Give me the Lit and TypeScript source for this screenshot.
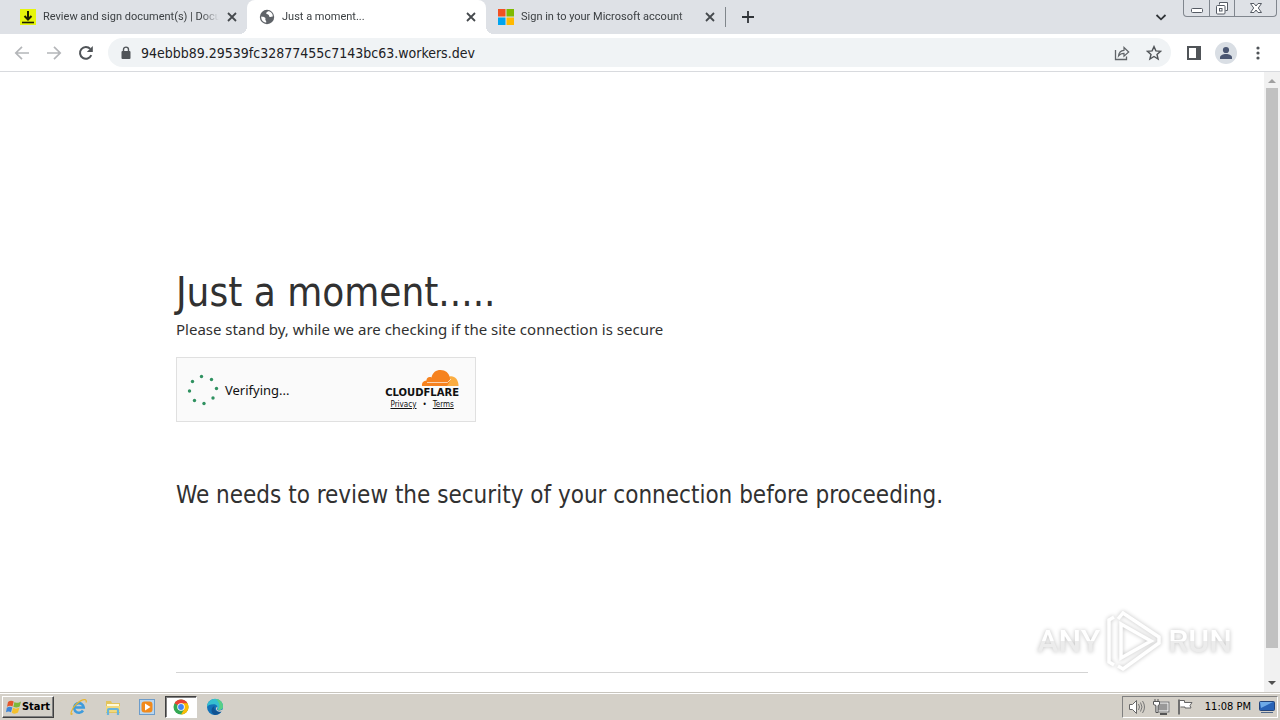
import { LitElement, html, css, svg } from "lit";
import { customElement, property } from "lit/decorators.js";

const closeIcon = html`<svg width="12" height="12" viewBox="0 0 12 12"><path d="M2 2l8 8M10 2l-8 8" stroke="#45494d" stroke-width="1.8" fill="none"/></svg>`;

const downloadIcon = html`<svg width="16" height="16" viewBox="0 0 16 16"><rect width="16" height="16" fill="#e6f50a"/><path d="M8 2v8M4.500 7L8 10.500 11.500 7" stroke="#1c1e00" stroke-width="2" fill="none"/><path d="M2 13.500h12" stroke="#1c1e00" stroke-width="1.600"/></svg>`;

const globeIcon = html`<svg width="16" height="16" viewBox="0 0 16 16"><circle cx="8" cy="8" r="7.200" fill="#5f6368"/><path d="M2.200 7.500c1.500.2 3 .2 4 1.300.8.9-.4 1.800.5 2.600.7.600.4 1.600.6 2.200C4 13.600 2 10.800 2.200 7.500zM9 2c-.3 1.200-1.600 1-1.800 2.100-.2 1.100 1.300 1.200 2.200 1.600 1 .5.3 1.700 1.400 2.200 1.100.4 1.600-.4 3-.3.2-2.800-1.800-5.200-4.800-5.600z" fill="#fff"/></svg>`;

const microsoftIcon = html`<svg width="16" height="16" viewBox="0 0 16 16"><path fill="#f25022" d="M0 0h7.500v7.500H0z"/><path fill="#7fba00" d="M8.500 0H16v7.500H8.500z"/><path fill="#00a4ef" d="M0 8.500h7.500V16H0z"/><path fill="#ffb900" d="M8.500 8.500H16V16H8.500z"/></svg>`;

const FONT = css`"DejaVu Sans Condensed", "Noto Sans", sans-serif`;
const LIGHT_FONT = css`"Noto Sans", "DejaVu Sans Condensed", sans-serif`;

@customElement("browser-tab")
class BrowserTab extends LitElement {
  @property() label = "";
  @property({ type: Boolean, reflect: true }) active = false;
  @property({ attribute: false }) icon: unknown;

  static styles = css`
    :host { display: flex; flex: 0 1 239px; min-width: 0; height: 34px; align-items: center; gap: 7px; padding: 0 9px 0 12px; box-sizing: border-box; color: #3c4043; position: relative; }
    :host([active]) { background: #fff; border-radius: 8px 8px 0 0; }
    :host([active])::before, :host([active])::after { content: ""; position: absolute; bottom: 0; width: 8px; height: 8px; }
    :host([active])::before { left: -8px; background: radial-gradient(circle at 0 0, transparent 8px, #fff 8px); }
    :host([active])::after { right: -8px; background: radial-gradient(circle at 100% 0, transparent 8px, #fff 8px); }
    .icon { display: flex; flex: none; }
    .title { flex: 1; min-width: 0; overflow: hidden; white-space: nowrap; font: 11px/16px Roboto, sans-serif; mask-image: linear-gradient(to right, #000 calc(100% - 18px), transparent); }
    button { display: flex; flex: none; padding: 0; border: 0; background: none; }
  `;

  render() {
    return html`<span class="icon">${this.icon}</span><span class="title">${this.label}</span><button aria-label="Close tab">${closeIcon}</button>`;
  }
}

@customElement("browser-chrome")
class BrowserChrome extends LitElement {
  static styles = css`
    :host { display: block; flex: none; }
    button { display: flex; align-items: center; justify-content: center; padding: 0; border: 0; background: none; }
    .strip { display: flex; height: 34px; padding-left: 8px; background: #dee1e6; align-items: center; }
    .divider { width: 1px; height: 20px; background: #80868b; flex: none; }
    .new { width: 44px; height: 34px; }
    .search { width: 32px; height: 34px; margin-left: auto; margin-right: 6px; }
    .window { display: flex; align-self: flex-start; height: 17px; box-sizing: border-box; border: 1px solid #80868e; border-top: 0; border-radius: 0 0 4px 4px; margin-right: 3px; }
    .window button { width: 25px; }
    .window button + button { border-left: 1px solid #80868e; }
    .window .exit { width: 42px; }
    .bar { display: flex; height: 37px; align-items: center; padding: 0 6px; border-bottom: 1px solid #d8dade; }
    .bar button { width: 32px; height: 32px; flex: none; }
    .address { display: flex; flex: 1; min-width: 0; align-items: center; height: 29px; margin: 0 7px 0 6px; padding: 0 1px 0 12px; border-radius: 15px; background: #f0f3f5; gap: 9px; }
    .address svg { flex: none; }
    .actions { display: flex; }
    input { flex: 1; min-width: 0; border: 0; padding: 0; margin: 0; outline: 0; background: none; color: #202124; font: 14px/20px ${FONT}; }
  `;

  render() {
    return html`
      <div class="strip">
        <browser-tab label="Review and sign document(s) | Docu" .icon=${downloadIcon}></browser-tab>
        <browser-tab active label="Just a moment..." .icon=${globeIcon}></browser-tab>
        <browser-tab label="Sign in to your Microsoft account" .icon=${microsoftIcon}></browser-tab>
        <span class="divider"></span>
        <button class="new" aria-label="New tab"><svg width="14" height="14" viewBox="0 0 14 14"><path d="M7 1v12M1 7h12" stroke="#303438" stroke-width="1.800"/></svg></button>
        <button class="search" aria-label="Search tabs"><svg width="12" height="12" viewBox="0 0 12 12"><path d="M1.500 4L6 8.300 10.500 4" fill="none" stroke="#303438" stroke-width="1.800"/></svg></button>
        <div class="window">
          <button aria-label="Minimize"><svg width="14" height="16" viewBox="0 0 14 16"><rect x="1.500" y="8.500" width="11" height="4" rx="1" fill="#fff" stroke="#555b64"/></svg></button>
          <button aria-label="Restore"><svg width="14" height="16" viewBox="0 0 14 16"><path d="M4.500 4.500v-2h8v8h-2" fill="#fff" stroke="#555b64"/><rect x="1.500" y="5.500" width="8.500" height="8.500" rx="1" fill="#fff" stroke="#555b64"/><rect x="4.500" y="8.500" width="2.500" height="2.500" fill="none" stroke="#555b64"/></svg></button>
          <button class="exit" aria-label="Close"><svg width="14" height="16" viewBox="0 0 14 16"><path d="M1.500 3.500h3.500L7 6l2-2.500h3.500L9.300 8l3.200 4.500H9L7 10l-2 2.500H1.500L4.700 8z" fill="#fff" stroke="#555b64"/></svg></button>
        </div>
      </div>
      <div class="bar">
        <button aria-label="Back"><svg width="16" height="16" viewBox="0 0 16 16"><path d="M15 8H2M8 1.800L1.800 8 8 14.200" fill="none" stroke="#b4b6b9" stroke-width="1.700"/></svg></button>
        <button aria-label="Forward"><svg width="16" height="16" viewBox="0 0 16 16"><path d="M1 8h13M8 1.800L14.200 8 8 14.200" fill="none" stroke="#b4b6b9" stroke-width="1.700"/></svg></button>
        <button aria-label="Reload"><svg width="16" height="16" viewBox="0 0 16 16"><path d="M13.300 10.200A5.900 5.900 0 1 1 12.300 3.900" fill="none" stroke="#505458" stroke-width="2"/><path d="M14.800 1v6H8.800z" fill="#505458"/></svg></button>
        <div class="address">
          <svg width="12" height="14" viewBox="0 0 12 14"><rect x="1.500" y="5" width="9" height="8" rx="1" fill="#505458"/><path d="M3.500 5.500V3.600a2.500 2.500 0 0 1 5 0v1.900" fill="none" stroke="#505458" stroke-width="1.400"/></svg>
          <input aria-label="Address and search bar" value="94ebbb89.29539fc32877455c7143bc63.workers.dev" />
          <div class="actions">
            <button aria-label="Share"><svg width="16" height="16" viewBox="0 0 16 16"><path d="M1.500 5v9.500h11v-3" fill="none" stroke="#606468" stroke-width="1.300"/><path d="M4.500 11c.3-3.600 2.100-5.500 5.500-5.700V2.500L14.700 7 10 11.200V8.400c-2.400 0-4.200.8-5.500 2.600z" fill="none" stroke="#606468" stroke-width="1.200"/></svg></button>
            <button aria-label="Bookmark"><svg width="16" height="16" viewBox="0 0 16 16"><path d="M8 1.600l1.900 4.300 4.700.4-3.600 3.100 1.100 4.600L8 11.500 3.900 14 5 9.400 1.400 6.300l4.700-.4z" fill="none" stroke="#505458" stroke-width="1.400"/></svg></button>
          </div>
        </div>
        <button aria-label="Side panel"><svg width="16" height="16" viewBox="0 0 16 16"><path d="M1 1h14v14H1zM3 3v10h7V3z" fill="#505458" fill-rule="evenodd"/></svg></button>
        <button aria-label="Profile"><svg width="22" height="22" viewBox="0 0 22 22"><circle cx="11" cy="11" r="11" fill="#d9dee4"/><circle cx="11" cy="8" r="3.100" fill="#4a5672"/><path d="M5 17v-1.500c0-2 3-3.500 6-3.500s6 1.500 6 3.500V17z" fill="#4a5672"/></svg></button>
        <button aria-label="Menu"><svg width="4" height="14" viewBox="0 0 4 14"><g fill="#505458"><circle cx="2" cy="2" r="1.600"/><circle cx="2" cy="7" r="1.600"/><circle cx="2" cy="12" r="1.600"/></g></svg></button>
      </div>`;
  }
}

@customElement("check-page")
class CheckPage extends LitElement {
  static styles = css`
    :host { display: flex; flex: 1; min-height: 0; background: #fff; color: #313131; font-family: ${FONT}; position: relative; }
    main { display: flex; flex-direction: column; flex: 1; min-width: 0; padding: 192px 176px 0; overflow: hidden; }
    h1, h2, p { margin: 0; font-weight: 400; }
    h1 { font-size: 40px; line-height: 56px; }
    p { font: 15px/18px ${LIGHT_FONT}; }
    .widget { display: flex; align-items: center; box-sizing: border-box; width: 300px; height: 65px; margin-top: 19px; padding: 0 16px 0 10px; border: 1px solid #e0e0e0; background: #fafafa; color: #111; gap: 6px; }
    .state { flex: 1; font: 13px/20px ${LIGHT_FONT}; }
    .brand { display: flex; flex-direction: column; align-items: center; }
    .name { font: bold 10px/12px "DejaVu Sans", sans-serif; }
    .cloud { align-self: flex-end; }
    .links { display: flex; gap: 6px; font-size: 8px; line-height: 12px; }
    .links a { color: #111; }
    h2 { margin-top: 55px; font-size: 24px; line-height: 36px; }
    hr { width: 100%; margin: 159px 0 0; border: 0; border-top: 1px solid #d4d4d4; }
    .scroll { display: flex; flex-direction: column; flex: none; width: 16px; background: #f1f1f1; align-items: center; }
    .scroll svg { flex: none; }
    .thumb { width: 12px; flex: 1; background: #c1c1c1; margin-bottom: 27px; }
    .mark { position: absolute; right: 48px; bottom: 21px; display: flex; align-items: center; gap: 6px; color: #fff; filter: drop-shadow(0 0 2px #c0c0c0); font: 500 32px/60px Roboto, sans-serif; }
    .mark span { background: linear-gradient(#fff 50%, #ececec 50%); background-clip: text; color: transparent; }
  `;

  render() {
    const dots = [[14.500, 2.500], [24.500, 5.500], [29.500, 14.500], [26, 24], [17, 29.500], [7.500, 26.500], [2.500, 17], [5.500, 7.500]];
    return html`
      <main>
        <h1>Just a moment.....</h1>
        <p>Please stand by, while we are checking if the site connection is secure</p>
        <section class="widget">
          <svg width="32" height="32" viewBox="0 0 32 32">${dots.map(([x, y]) => svg`<circle cx=${x} cy=${y} r="1.700" fill="#2f9160"/>`)}</svg>
          <span class="state">Verifying...</span>
          <div class="brand">
            <svg class="cloud" width="38" height="18" viewBox="0 0 38 18"><path d="M28.500 7.500c4.700-1.200 9 2.700 9 9.500H25z" fill="#fbad41"/><path d="M1 17c-.4-3.200 1.700-5.200 4.500-5.400-.2-3 2.600-4.400 5-3.200C11.600 3.500 15 1 19.500 1c5 0 8.500 3 9.400 7.500.5 3.200-1 5.800-2.900 8.500z" fill="#f6821f"/><path d="M6 13.500h20.500L30 10" fill="none" stroke="#fff" stroke-width=".8" opacity=".8"/></svg>
            <span class="name">CLOUDFLARE</span>
            <div class="links"><a href="#privacy">Privacy</a><span>•</span><a href="#terms">Terms</a></div>
          </div>
        </section>
        <h2>We needs to review the security of your connection before proceeding.</h2>
        <hr />
      </main>
      <div class="scroll">
        <svg width="16" height="16" viewBox="0 0 16 16"><path d="M4 11l4-4 4 4z" fill="#a0a0a0"/></svg>
        <div class="thumb"></div>
        <svg width="16" height="17" viewBox="0 0 16 17"><path d="M4 6l4 4 4-4z" fill="#505050"/></svg>
      </div>
      <div class="mark"><span>ANY</span><svg width="56" height="60" viewBox="0 0 56 60"><path d="M8 6l-5 3v42l5 3M15 13v34l30-17zM12 8l5-6 36 24v6L17 58l-5-3" fill="none" stroke="#fff" stroke-width="3.500"/></svg><span>RUN</span></div>`;
  }
}

@customElement("task-bar")
class TaskBar extends LitElement {
  static styles = css`
    :host { display: flex; flex: none; align-items: center; height: 28px; box-sizing: border-box; padding: 3px 2px 2px; background: #d4d0c8; border-top: 1px solid #c8c5be; box-shadow: inset 0 1px #fff; font-family: ${FONT}; }
    button { display: flex; align-items: center; justify-content: center; padding: 0; border: 0; background: none; width: 32px; height: 22px; }
    .start { width: 52px; gap: 0; margin-right: 9px; border: 1px solid; border-color: #fff #404040 #404040 #fff; box-shadow: inset -1px -1px #808080; font: bold 11px/16px ${FONT}; color: #000; }
    .apps { display: flex; gap: 2px; }
    .current { background: #fff; border: 1px solid; border-color: #404040 #fff #fff #404040; box-shadow: inset 1px 1px #808080; box-sizing: border-box; }
    .tray { display: flex; align-items: center; margin-left: auto; height: 22px; box-sizing: border-box; padding: 0 2px; border: 1px solid; border-color: #808080 #fff #fff #808080; }
    .tray button { width: 24px; }
    .tray .desktop { width: 16px; }
    time { margin: 0 8px; font-size: 11px; line-height: 16px; color: #000; white-space: nowrap; }
  `;

  render() {
    return html`
      <button class="start"><svg width="16" height="16" viewBox="0 0 16 16"><path d="M2 3c2-1.500 4-1.500 5.700-.4L6.500 7.500C4.800 6.500 3 6.600 1 7.800z" fill="#e3562b"/><path d="M8.500 3c2 1.200 4 1.200 6.500-.5l-1.300 5C11.600 8.800 9.500 9 7.300 7.800z" fill="#7db83a"/><path d="M.8 8.700c2-1.200 3.800-1.200 5.500-.2L5 13.300C3.400 12.300 1.500 12.400 0 13.300z" fill="#3d85d8"/><path d="M7 8.800c2 1.200 4.200 1.100 6.500-.3L12 13.600c-2 1.300-4.300 1.400-6.200.2z" fill="#f4c02c"/></svg>Start</button>
      <div class="apps">
        <button aria-label="Internet Explorer"><svg width="18" height="18" viewBox="0 0 18 18"><path d="M4.500 9.500h9.200A4.800 4.800 0 1 0 13 12.500" fill="none" stroke="#3e9bdc" stroke-width="2.600"/><path d="M2.500 15.500C-.5 19 1 10.500 7 5.500s10.500-5 9-1" fill="none" stroke="#e8b52d" stroke-width="1.200"/></svg></button>
        <button aria-label="Explorer"><svg width="18" height="18" viewBox="0 0 18 18"><path d="M2 3h5l1 2h8v10H2z" fill="#e3c45c"/><path d="M3 6h12v3H3z" fill="#fff9d8"/><path d="M2 8h14v6H2z" fill="#f1d97d"/><path d="M4 17v-5q0-1 1-1h8q1 0 1 1v5" fill="none" stroke="#67b4dc" stroke-width="2.200"/></svg></button>
        <button aria-label="Media Player"><svg width="18" height="18" viewBox="0 0 18 18"><rect x="1.500" y="1.500" width="15" height="15" fill="#b9d6ef" stroke="#6c9cca"/><rect x="3.500" y="3.500" width="11" height="11" rx="3" fill="#f18a1c"/><path d="M7 5.500v7L12.500 9z" fill="#fff"/></svg></button>
        <button class="current" aria-label="Chrome"><svg width="16" height="16" viewBox="0 0 16 16"><circle cx="8" cy="8" r="7.500" fill="#34a853"/><path d="M8 8L1.500 4.250A7.500 7.500 0 0 1 14.500 4.250z" fill="#ea4335"/><path d="M8 4.250h6.500A7.500 7.500 0 0 1 8 15.500l3.250-5.600z" fill="#fbbc05"/><circle cx="8" cy="8" r="3.750" fill="#fff"/><circle cx="8" cy="8" r="2.900" fill="#4285f4"/></svg></button>
        <button aria-label="Edge"><svg width="18" height="18" viewBox="0 0 18 18"><circle cx="9" cy="9" r="8" fill="#1372b8"/><path d="M1 9a8 8 0 0 1 16-.5c.2 3-2.500 4-5.500 3.200 1-2.700-.5-5.400-4-5.400C4 6.300 1.500 7.500 1 9z" fill="#35bfd0"/><path d="M10 1.100c4.500.5 7 3.700 7 7.400 0 2.500-2 3.800-5 3.400 2.700-3 1.500-7.500-2-10.800z" fill="#58cf87"/><path d="M8.500 8c-1 3 1 6 5.500 5.500l2-1c-1.500 2.800-4 4.300-7 4.500-4-1-5-7-.5-9z" fill="#105292"/><path d="M11.300 8.500c.6 1.200 0 2.100-.3 2.700.4 1.500 4 1.800 6.500-.2l-1 2.300c-3 1.500-7-.3-6.500-3.300z" fill="#d4d0c8"/></svg></button>
      </div>
      <div class="tray">
        <button aria-label="Volume"><svg width="18" height="18" viewBox="0 0 18 18"><path d="M1.500 6.500h3L8.500 2.500v13L4.500 11.500h-3z" fill="#fff" stroke="#666"/><path d="M10.500 6q2 3 0 6M12.500 4.500q3 4.500 0 9M14.500 3q4 6 0 12" fill="none" stroke="#777"/></svg></button>
        <button aria-label="Network"><svg width="18" height="18" viewBox="0 0 18 18"><rect x="4.500" y="4.500" width="12" height="9" fill="#999" stroke="#fff" stroke-width="2"/><rect x="4" y="4" width="13" height="10" fill="none" stroke="#666"/><path d="M8 16h7" stroke="#555" stroke-width="2"/><path d="M1.500 3.500h6v3l-1.500 1v7h-2v-7l-2.500-1zM3 1v2.500M6 1v2.500" fill="#fff" stroke="#555"/></svg></button>
        <button aria-label="Action Center"><svg width="18" height="18" viewBox="0 0 18 18"><path d="M3.500 2.500h5v2h7.500l-2 3 1 2.500H9V9H4.500" fill="#fff" stroke="#666"/><path d="M3 1.500v15" stroke="#666" stroke-width="1.800"/></svg></button>
        <time>11:08 PM</time>
        <button class="desktop" aria-label="Show desktop"><svg width="16" height="16" viewBox="0 0 16 16"><rect x=".5" y="2.500" width="15" height="9" rx="1" fill="#2863b7" stroke="#23447a"/><path d="M1 3h13L2 9z" fill="#6daae8"/><path d="M2 13.500h12" stroke="#4e6688"/></svg></button>
      </div>`;
  }
}

@customElement("app-root")
class AppRoot extends LitElement {
  static styles = css`
    :host { display: flex; flex-direction: column; height: 100vh; overflow: hidden; }
  `;

  render() {
    return html`<browser-chrome></browser-chrome><check-page></check-page><task-bar></task-bar>`;
  }
}
